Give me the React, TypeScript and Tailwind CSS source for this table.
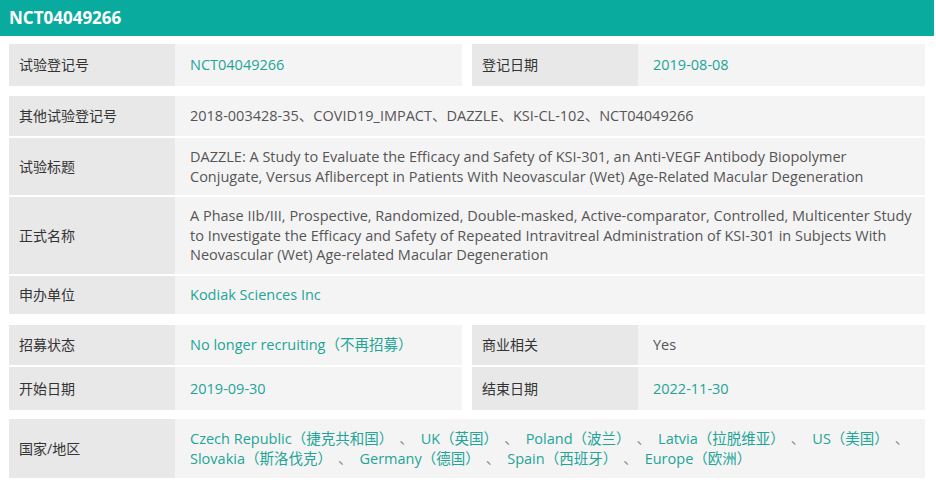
const font = "font-['Open_Sans','Noto_Sans_CJK_SC',sans-serif]";

const teal = "text-[#22a596]";
const gray = "text-[#555555]";

function Label({ children }: { children: React.ReactNode }) {
  return (
    <div className="flex w-[166px] shrink-0 items-center bg-[#e9e8e9] pl-[10px] text-[14px] text-[#333333]">
      {children}
    </div>
  );
}

function Value({
  children,
  color = gray,
}: {
  children: React.ReactNode;
  color?: string;
}) {
  return (
    <div className={`flex min-w-0 flex-1 items-center bg-[#f5f4f5] pl-[15px] ${color}`}>
      <div className="whitespace-nowrap">{children}</div>
    </div>
  );
}

/** Linha com dois pares label/valor lado a lado. */
function PairRow({
  a,
  av,
  ac,
  b,
  bv,
  bc,
  h,
}: {
  a: string;
  av: string;
  ac: string;
  b: string;
  bv: string;
  bc: string;
  h: string;
}) {
  return (
    <div className={`flex gap-[10px] ${h}`}>
      <div className="flex w-[453px] shrink-0">
        <Label>{a}</Label>
        <Value color={ac}>{av}</Value>
      </div>
      <div className="flex w-[453px] shrink-0">
        <Label>{b}</Label>
        <Value color={bc}>{bv}</Value>
      </div>
    </div>
  );
}

function Row({
  label,
  h,
  color,
  children,
}: {
  label: string;
  h: string;
  color?: string;
  children: React.ReactNode;
}) {
  return (
    <div className={`flex ${h}`}>
      <Label>{label}</Label>
      <Value color={color}>{children}</Value>
    </div>
  );
}

const countries = [
  ["Czech Republic（捷克共和国）", "UK（英国）", "Poland（波兰）", "Latvia（拉脱维亚）", "US（美国）"],
  ["Slovakia（斯洛伐克）", "Germany（德国）", "Spain（西班牙）", "Europe（欧洲）"],
];

export default function App() {
  return (
    <div className={`h-[484px] w-[936px] overflow-hidden bg-white text-[14.5px] leading-[19.5px] ${font}`}>
      <div className="flex h-[36px] w-[934px] items-center bg-[#0aab9f] pl-[9px] text-[17px] font-bold text-white">
        NCT04049266
      </div>

      <div className="flex w-[925px] flex-col pl-[9px] pt-[8px]">
        <PairRow
          h="h-[42px]"
          a="试验登记号"
          av="NCT04049266"
          ac={teal}
          b="登记日期"
          bv="2019-08-08"
          bc={teal}
        />

        <div className="mt-[10px] flex flex-col gap-[2px]">
          <Row label="其他试验登记号" h="h-[40px]">
            2018-003428-35、COVID19_IMPACT、DAZZLE、KSI-CL-102、NCT04049266
          </Row>
          <Row label="试验标题" h="h-[57px]">
            DAZZLE: A Study to Evaluate the Efficacy and Safety of KSI-301, an Anti-VEGF Antibody Biopolymer
            <br />
            Conjugate, Versus Aflibercept in Patients With Neovascular (Wet) Age-Related Macular Degeneration
          </Row>
          <Row label="正式名称" h="h-[77px]">
            A Phase IIb/III, Prospective, Randomized, Double-masked, Active-comparator, Controlled, Multicenter Study
            <br />
            to Investigate the Efficacy and Safety of Repeated Intravitreal Administration of KSI-301 in Subjects With
            <br />
            Neovascular (Wet) Age-related Macular Degeneration
          </Row>
          <Row label="申办单位" h="h-[38px]" color={teal}>
            Kodiak Sciences Inc
          </Row>
        </div>

        <div className="mt-[11px] flex flex-col gap-[2px]">
          <PairRow
            h="h-[40px]"
            a="招募状态"
            av="No longer recruiting（不再招募）"
            ac={teal}
            b="商业相关"
            bv="Yes"
            bc={gray}
          />
          <PairRow
            h="h-[43px]"
            a="开始日期"
            av="2019-09-30"
            ac={teal}
            b="结束日期"
            bv="2022-11-30"
            bc={teal}
          />
        </div>

        <div className="mt-[9px]">
          <Row label="国家/地区" h="h-[59px]" color={teal}>
            {countries.map((line, i) => (
              <div key={i} className="flex">
                {line.map((c, j) => (
                  <span key={c} className="flex shrink-0">
                    <span>{c}</span>
                    {(i === 0 || j < line.length - 1) && (
                      <span className="ml-[6px] mr-[7px] text-[#8a8a8a]">、</span>
                    )}
                  </span>
                ))}
              </div>
            ))}
          </Row>
        </div>
      </div>
    </div>
  );
}
